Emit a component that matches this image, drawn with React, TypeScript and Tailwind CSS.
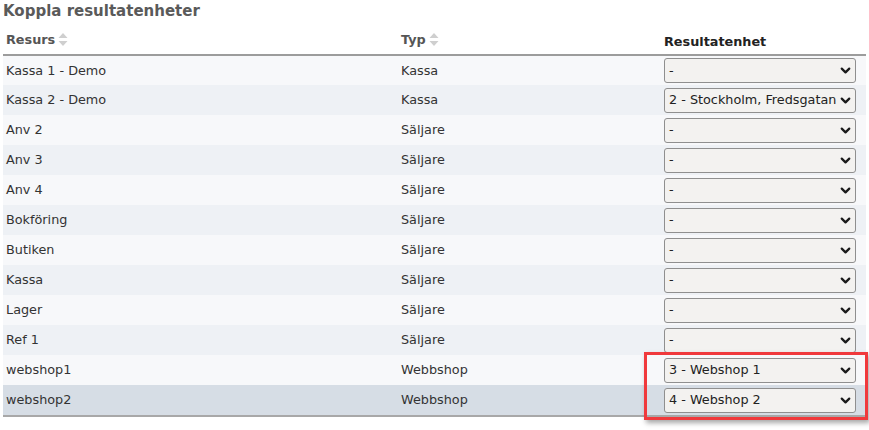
import { ChevronDown } from "lucide-react"

interface Row {
  name: string
  type: string
  unit: string
}

const rows: Row[] = [
  { name: "Kassa 1 - Demo", type: "Kassa", unit: "-" },
  { name: "Kassa 2 - Demo", type: "Kassa", unit: "2 - Stockholm, Fredsgatan" },
  { name: "Anv 2", type: "Säljare", unit: "-" },
  { name: "Anv 3", type: "Säljare", unit: "-" },
  { name: "Anv 4", type: "Säljare", unit: "-" },
  { name: "Bokföring", type: "Säljare", unit: "-" },
  { name: "Butiken", type: "Säljare", unit: "-" },
  { name: "Kassa", type: "Säljare", unit: "-" },
  { name: "Lager", type: "Säljare", unit: "-" },
  { name: "Ref 1", type: "Säljare", unit: "-" },
  { name: "webshop1", type: "Webbshop", unit: "3 - Webshop 1" },
  { name: "webshop2", type: "Webbshop", unit: "4 - Webshop 2" },
]

function SortIcon() {
  return (
    <svg width="10" height="15" viewBox="0 0 10 15" className="ml-[3px] inline-block">
      <path d="M5 1 L9.5 6 H0.5 Z" fill="#cfcfcf" />
      <path d="M5 14 L9.5 9 H0.5 Z" fill="#cfcfcf" />
    </svg>
  )
}

function UnitSelect({ value }: { value: string }) {
  return (
    <div className="flex h-[25px] w-[192px] items-center justify-between rounded-[3px] border border-[#8f8f8f] bg-[#f3f2f0] pl-[4px] pr-[2px] text-[#222]">
      <span className="whitespace-nowrap">{value}</span>
      <ChevronDown size={15} strokeWidth={3.6} className="shrink-0 text-[#1a1a1a]" />
    </div>
  )
}

export default function App() {
  return (
    <div className="min-h-screen bg-white px-[3px] font-['DejaVu_Sans',sans-serif] text-[12.8px] text-[#333]">
      <h1 className="pt-[1px] text-[15px] font-bold leading-[20px] text-[#5a5a5a]">Koppla resultatenheter</h1>

      <div className="relative mt-[9px] w-[863px]">
        <table className="w-full border-collapse">
          <thead>
            <tr className="h-[25px] border-b-2 border-[#9c9c9c] text-left text-[#555]">
              <th className="w-[395px] pl-[3px] align-top font-bold">
                <span className="inline-flex items-center">
                  Resurs
                  <SortIcon />
                </span>
              </th>
              <th className="w-[263px] pl-[3px] align-top font-bold">
                <span className="inline-flex items-center">
                  Typ
                  <SortIcon />
                </span>
              </th>
              <th className="pl-[3px] align-top font-bold text-[#222]">
                <span className="inline-block pt-[2px]">Resultatenhet</span>
              </th>
            </tr>
          </thead>
          <tbody>
            {rows.map((r, i) => (
              <tr
                key={r.name}
                className={
                  i === rows.length - 1
                    ? "h-[30px] bg-[#d6dde5]"
                    : i % 2 === 0
                      ? "h-[30px] bg-[#f7f8fa]"
                      : "h-[30px] bg-[#eef1f5]"
                }
              >
                <td className="pl-[3px]">{r.name}</td>
                <td className="pl-[3px]">{r.type}</td>
                <td className="pl-[3px]">
                  <UnitSelect value={r.unit} />
                </td>
              </tr>
            ))}
          </tbody>
        </table>
        <div className="border-t-2 border-[#a8a8a8]" />

        <div className="pointer-events-none absolute bottom-[-3px] left-[641px] h-[68px] w-[224px] border-[3px] border-[#f0393c] shadow-[2px_3px_5px_rgba(0,0,0,0.35)]" />
      </div>
    </div>
  )
}
